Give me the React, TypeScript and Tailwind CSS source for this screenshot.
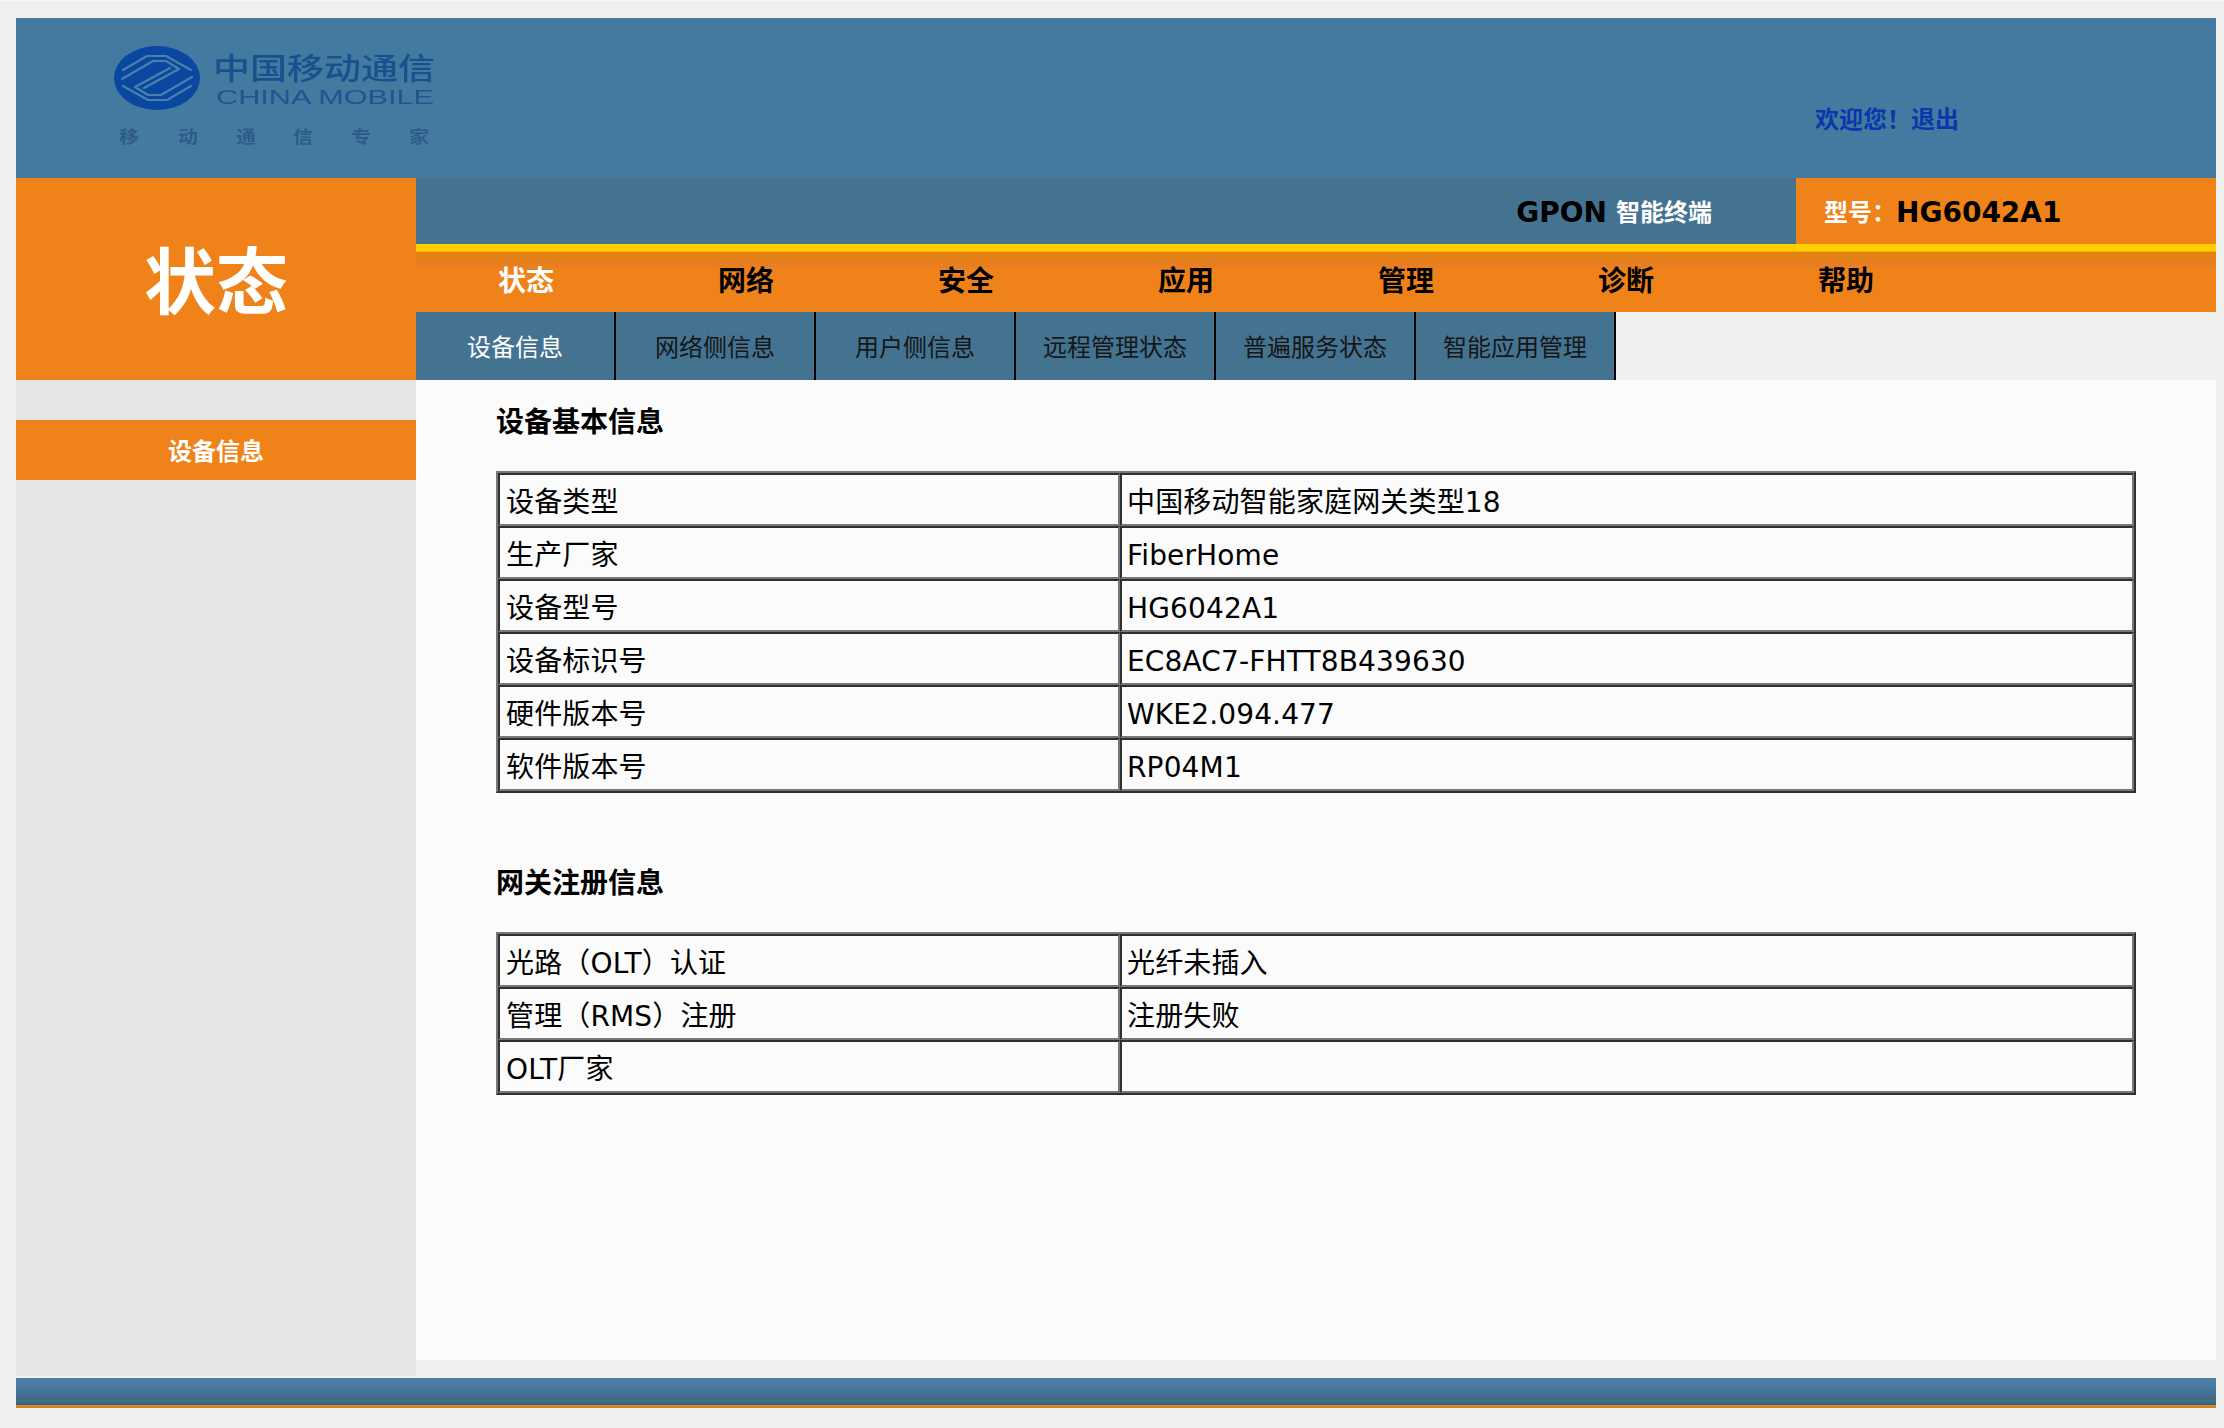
const navItems = ['状态', '网络', '安全', '应用', '管理', '诊断', '帮助'];
const subItems = ['设备信息', '网络侧信息', '用户侧信息', '远程管理状态', '普遍服务状态', '智能应用管理'];

const basicInfo = [
  ['设备类型', '中国移动智能家庭网关类型18'],
  ['生产厂家', 'FiberHome'],
  ['设备型号', 'HG6042A1'],
  ['设备标识号', 'EC8AC7-FHTT8B439630'],
  ['硬件版本号', 'WKE2.094.477'],
  ['软件版本号', 'RP04M1'],
];

const gatewayInfo = [
  ['光路（OLT）认证', '光纤未插入'],
  ['管理（RMS）注册', '注册失败'],
  ['OLT厂家', ''],
];

function Logo() {
  const slogan = [
    ['移', 103],
    ['动', 162],
    ['通', 220],
    ['信', 277],
    ['专', 335],
    ['家', 393],
  ] as const;
  return (
    <svg width="440" height="160" viewBox="0 0 440 160" className="blur-[0.6px]">
      <ellipse cx="141" cy="60" rx="43" ry="32" fill="#0a47a0" />
      <g fill="none" stroke="#4a80ab" strokeWidth="2.2" strokeLinejoin="round" strokeLinecap="round">
        <path d="M107 52 L131 38 L150 38 L175 52" />
        <path d="M106 61 L137 43 L150 43 L163 51 L128 70" />
        <path d="M176 59 L145 77 L132 77 L119 69 L154 50" />
        <path d="M175 68 L151 82 L132 82 L107 68" />
      </g>
      <text x="197" y="61" textLength="222" lengthAdjust="spacingAndGlyphs" fontSize="30" fontWeight="500" fill="#17528f" fontFamily="'Noto Sans CJK SC', sans-serif">中国移动通信</text>
      <text x="200" y="86" textLength="218" lengthAdjust="spacingAndGlyphs" fontSize="21" fill="#1f5590" fontFamily="'Liberation Sans', sans-serif">CHINA MOBILE</text>
      {slogan.map(([ch, x]) => (
        <text key={ch} x={x} y="125" textLength="20" lengthAdjust="spacingAndGlyphs" fontSize="17" fontWeight="700" fill="#2f5b88" fontFamily="'Noto Sans CJK SC', sans-serif">{ch}</text>
      ))}
    </svg>
  );
}

function InfoTable({ rows }: { rows: string[][] }) {
  return (
    <table className="w-full table-fixed border-separate border-spacing-0 border-2 border-t-[#777777] border-l-[#777777] border-r-[#2f2f2f] border-b-[#2f2f2f] text-[28px] tracking-[0.15px] text-black">
      <tbody>
        {rows.map(([label, value]) => (
          <tr key={label} className="h-[53px]">
            <td className="w-[622px] border-2 border-t-[#2f2f2f] border-l-[#2f2f2f] border-r-[#777777] border-b-[#777777] pt-[7px] pl-[6px] leading-none whitespace-nowrap">{label}</td>
            <td className="border-2 border-t-[#2f2f2f] border-l-[#2f2f2f] border-r-[#777777] border-b-[#777777] pt-[7px] pl-[5px] leading-none whitespace-nowrap">{value}</td>
          </tr>
        ))}
      </tbody>
    </table>
  );
}

export default function App() {
  return (
    <div
      className="h-[1428px] overflow-hidden border-t border-[#f7f7f7] bg-[#eff1ee] pt-[17px] pr-2 pl-4"
      style={{ fontFamily: "'DejaVu Sans', 'Noto Sans CJK SC', sans-serif" }}
    >
      {/* Banner */}
      <div className="flex h-40 items-start justify-between bg-[#447a9f]">
        <Logo />
        <div className="mt-[86px] mr-[257px] text-2xl leading-8 font-bold text-[#0a38ac]">欢迎您！退出</div>
      </div>

      <div className="flex h-[202px]">
        <div className="flex w-[400px] items-center justify-center bg-[#f0821a] pt-2 text-[72px] leading-none font-bold text-white">状态</div>
        <div className="flex flex-1 flex-col">
          <div className="flex h-[66px] bg-[#447392]">
            <div className="flex w-[1380px] items-center justify-end pt-1 pr-[84px] font-bold">
              <span className="text-[28px] text-black">GPON</span>
              <span className="ml-[9px] text-2xl text-white">智能终端</span>
            </div>
            <div className="flex w-[420px] items-center bg-[#f0821a] pt-1 pl-7 font-bold">
              <span className="text-2xl text-white">型号：</span>
              <span className="text-[28px] text-black">HG6042A1</span>
            </div>
          </div>
          <div className="h-2 bg-[linear-gradient(#ffcf00_0,#ffcf00_6px,#f5b30c_8px)]" />
          <div className="flex h-[60px] items-center bg-[linear-gradient(#e2810f_0,#e97e25_15px,#f0821a_17px)]">
            {navItems.map((item, i) => (
              <div key={item} className={`w-[220px] text-center text-[28px] font-bold ${i === 0 ? 'text-white' : 'text-black'}`}>
                {item}
              </div>
            ))}
          </div>
          <div className="flex h-[68px] text-2xl">
            {subItems.map((item, i) => (
              <div
                key={item}
                className={`flex w-[200px] items-center justify-center border-r-2 border-black bg-[#447392] pt-[3px] ${i === 0 ? 'text-white' : 'text-[#161616]'}`}
              >
                {item}
              </div>
            ))}
          </div>
        </div>
      </div>

      <div className="flex items-start">
        <div className="h-[996px] w-[400px] bg-[#e6e6e6] pt-10">
          <div className="flex h-[60px] items-center justify-center bg-[#f0821a] pt-[3px] text-2xl font-bold text-white">设备信息</div>
        </div>
        <div className="h-[980px] flex-1 bg-[#fbfbfb] px-20 pt-[23px]">
          <h2 className="mb-7 text-[28px] leading-10 font-bold text-black">设备基本信息</h2>
          <InfoTable rows={basicInfo} />
          <h2 className="mt-[71px] mb-7 text-[28px] leading-10 font-bold text-black">网关注册信息</h2>
          <InfoTable rows={gatewayInfo} />
        </div>
      </div>

      {/* Footer */}
      <div className="mt-[2px] h-[30px] bg-[linear-gradient(#4f7fa5_0,#4d7ca1_8px,#3f6a8a_20px,#446f78_24px,#2f5f8c_26px,#2f5f80_27px,#e28d22_27px,#d07f20_30px)]" />
    </div>
  );
}
